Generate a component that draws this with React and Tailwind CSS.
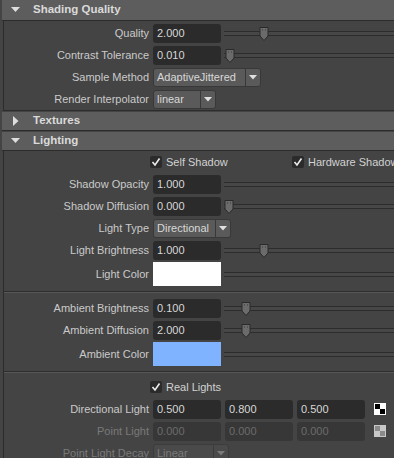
import React from "react";

const font = { fontFamily: '"Liberation Sans", Arial, sans-serif' };

function Header({ title, open, first }) {
  return (
    <div
      className={`border-b border-[#2c2c2c] bg-[#5d5d5d] flex items-center ml-[2px] ${
        first ? "h-[21px]" : "h-[19px]"
      }`}
    >
      <div className="w-[31px] flex justify-center">
        {open ? (
          <svg width="9" height="6" viewBox="0 0 9 6" className="ml-[-5px]">
            <polygon points="0,0 9,0 4.5,5" fill="#dedede" />
          </svg>
        ) : (
          <svg width="6" height="10" viewBox="0 0 6 10" className="ml-[-4px]">
            <polygon points="0,0 5.5,5 0,10" fill="#dedede" />
          </svg>
        )}
      </div>
      <span className="text-[11.5px] font-bold text-[#dadada]">{title}</span>
    </div>
  );
}

function Label({ children, dim }) {
  return (
    <div
      className={`w-[145px] shrink-0 text-right whitespace-nowrap ${
        dim ? "text-[#7a7a7a]" : "text-[#cacaca]"
      }`}
    >
      {children}
    </div>
  );
}

function Field({ value, dim }) {
  return (
    <div
      className={`w-[68px] h-[19px] shrink-0 rounded-[3px] px-[4px] flex items-center ${
        dim ? "bg-[#373737] text-[#6c6c6c]" : "bg-[#2b2b2b] text-[#d8d8d8]"
      }`}
    >
      {value}
    </div>
  );
}

function Thumb({ left }) {
  return (
    <svg
      width="10"
      height="14"
      viewBox="0 0 10 14"
      className="absolute top-[-5px]"
      style={{ left }}
    >
      <polygon
        points="1,0.5 9,0.5 9,9 5,13.5 1,9"
        fill="#6b6b6b"
        stroke="#2a2a2a"
      />
      <rect x="3" y="2.5" width="1" height="1" fill="#3a3a3a" />
      <rect x="6" y="2.5" width="1" height="1" fill="#3a3a3a" />
    </svg>
  );
}

function Slider({ thumb }) {
  return (
    <div className="relative ml-[3px] flex-1 h-[5px] border-y border-[#2c2c2c] bg-[#474747]">
      {thumb !== undefined && <Thumb left={thumb} />}
    </div>
  );
}

function Row({ label, children, dim, tall }) {
  return (
    <div className={`flex items-center ${tall ? "h-[26px]" : "h-[22px]"}`}>
      <Label dim={dim}>{label}</Label>
      <div className="flex items-center flex-1 ml-[4px] min-w-0">{children}</div>
    </div>
  );
}

function Dropdown({ value, width, dim }) {
  return (
    <div
      className={`h-[19px] shrink-0 flex rounded-[3px] border ${
        dim
          ? "border-[#3c3c3c] bg-[#4a4a4a] text-[#7a7a7a]"
          : "border-[#383838] bg-[#5a5a5a] text-[#d8d8d8]"
      }`}
      style={{ width }}
    >
      <div className="flex-1 flex items-center pl-[3px] overflow-hidden whitespace-nowrap">
        {value}
      </div>
      <div
        className={`w-[15px] flex items-center justify-center border-l ${
          dim ? "border-[#3c3c3c]" : "border-[#383838]"
        }`}
      >
        <svg width="8" height="5" viewBox="0 0 8 5">
          <polygon points="0,0 8,0 4,4.5" fill={dim ? "#7a7a7a" : "#e0e0e0"} />
        </svg>
      </div>
    </div>
  );
}

function Check({ label }) {
  return (
    <div className="flex items-center gap-[4px]">
      <div className="w-[12px] h-[12px] shrink-0 rounded-[2px] bg-[#2b2b2b] flex items-center justify-center">
        <svg width="10" height="10" viewBox="0 0 10 10">
          <polyline
            points="1.5,5 4,8 8.5,1.5"
            fill="none"
            stroke="#ededed"
            strokeWidth="1.6"
          />
        </svg>
      </div>
      <span className="text-[#d2d2d2] whitespace-nowrap">{label}</span>
    </div>
  );
}

function Checker({ dim }) {
  const a = dim ? "#8a8a8a" : "#000000";
  const b = dim ? "#c8c8c8" : "#ffffff";
  return (
    <svg width="12" height="12" viewBox="0 0 12 12" className="ml-[9px] shrink-0">
      <rect x="0" y="0" width="12" height="12" fill={b} />
      <rect x="1" y="1" width="5" height="5" fill={a} />
      <rect x="6" y="6" width="5" height="5" fill={a} />
    </svg>
  );
}

function Separator({ h }) {
  return (
    <div className={`flex items-center ${h}`}>
      <div className="w-full border-t border-[#2e2e2e] border-b border-b-[#575757]" />
    </div>
  );
}

export default function App() {
  return (
    <div
      className="w-[394px] h-[458px] overflow-hidden bg-[#444444] text-[11px] leading-none"
      style={font}
    >
      {/* SHADING QUALITY */}
      <Header title="Shading Quality" open first />
      <div className="ml-[3px] border-l border-b border-[#2c2c2c] pt-[1px] mb-[1px]">
        <Row label="Quality">
          <Field value="2.000" />
          <Slider thumb={35} />
        </Row>
        <Row label="Contrast Tolerance">
          <Field value="0.010" />
          <Slider thumb={1} />
        </Row>
        <Row label="Sample Method">
          <Dropdown value="AdaptiveJittered" width={108} />
        </Row>
        <Row label="Render Interpolator">
          <Dropdown value="linear" width={63} />
        </Row>
      </div>

      {/* TEXTURES */}
      <Header title="Textures" />
      <div className="h-[1px]" />

      {/* LIGHTING */}
      <Header title="Lighting" open />
      <div className="ml-[3px] border-l border-[#2c2c2c]">
        <div className="h-[22px] flex items-center">
          <div className="w-[146px] shrink-0" />
          <div className="w-[142px] shrink-0">
            <Check label="Self Shadow" />
          </div>
          <Check label="Hardware Shadow" />
        </div>
        <Row label="Shadow Opacity">
          <Field value="1.000" />
          <Slider />
        </Row>
        <Row label="Shadow Diffusion">
          <Field value="0.000" />
          <Slider thumb={0} />
        </Row>
        <Row label="Light Type">
          <Dropdown value="Directional" width={78} />
        </Row>
        <Row label="Light Brightness">
          <Field value="1.000" />
          <Slider thumb={35} />
        </Row>
        <Row label="Light Color" tall>
          <div className="w-[68px] h-[24px] shrink-0 bg-white" />
          <Slider />
        </Row>

        <Separator h="h-[10px]" />

        <Row label="Ambient Brightness">
          <Field value="0.100" />
          <Slider thumb={17} />
        </Row>
        <Row label="Ambient Diffusion">
          <Field value="2.000" />
          <Slider thumb={17} />
        </Row>
        <Row label="Ambient Color" tall>
          <div className="w-[68px] h-[24px] shrink-0 bg-[#80b3ff]" />
          <Slider />
        </Row>

        <Separator h="h-[9px]" />

        <div className="h-[22px] flex items-center">
          <div className="w-[146px] shrink-0" />
          <Check label="Real Lights" />
        </div>
        <Row label="Directional Light">
          <div className="flex gap-[4px]">
            <Field value="0.500" />
            <Field value="0.800" />
            <Field value="0.500" />
          </div>
          <Checker />
        </Row>
        <Row label="Point Light" dim>
          <div className="flex gap-[4px]">
            <Field value="0.000" dim />
            <Field value="0.000" dim />
            <Field value="0.000" dim />
          </div>
          <Checker dim />
        </Row>
        <Row label="Point Light Decay" dim>
          <Dropdown value="Linear" width={76} dim />
        </Row>
      </div>
    </div>
  );
}
